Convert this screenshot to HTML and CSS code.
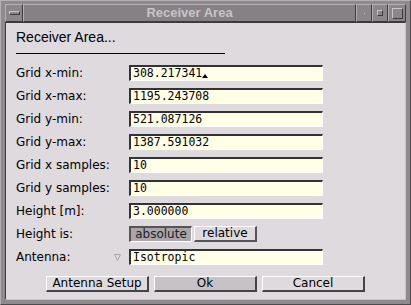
FILE: index.html
```html
<!DOCTYPE html>
<html>
<head>
<meta charset="utf-8">
<link rel="stylesheet" href="styles.css">
</head>
<body>
<div class="window">
  <div class="titlebar">
    <div class="wbtn menu"><span class="menu-bar"></span></div>
    <div class="title">Receiver Area</div>
    <div class="wbtn small"><span class="dot"></span></div>
    <div class="wbtn small"><span class="sq"></span></div>
    <div class="wbtn max"><span class="bigsq"></span></div>
  </div>
  <div class="content">
    <div class="heading">Receiver Area...</div>
    <div class="rule"></div>
    <div class="form">
      <div class="label">Grid x-min:</div>
      <div class="field">308.217341<span class="caret"></span></div>
      <div class="label">Grid x-max:</div>
      <div class="field">1195.243708</div>
      <div class="label">Grid y-min:</div>
      <div class="field">521.087126</div>
      <div class="label">Grid y-max:</div>
      <div class="field">1387.591032</div>
      <div class="label">Grid x samples:</div>
      <div class="field">10</div>
      <div class="label">Grid y samples:</div>
      <div class="field">10</div>
      <div class="label">Height [m]:</div>
      <div class="field">3.000000</div>
      <div class="label">Height is:</div>
      <div class="toggles">
        <div class="tbtn pressed">absolute</div>
        <div class="tbtn">relative</div>
      </div>
      <div class="label antenna">Antenna:<svg class="tri" width="7" height="7" viewBox="0 0 7 7"><path d="M0.5 0.5 H6.5 L3.5 6.5 Z" fill="none" stroke="#a8a4a8" stroke-width="1"/></svg></div>
      <div class="field">Isotropic</div>
    </div>
    <div class="buttons">
      <div class="btn">Antenna Setup</div>
      <div class="btn default">Ok</div>
      <div class="btn">Cancel</div>
    </div>
  </div>
</div>
</body>
</html>
```

FILE: styles.css
```css
* { box-sizing: border-box; }
html, body { margin: 0; padding: 0; background: #8e8a8e; }
.window {
  width: 411px;
  height: 305px;
  background: #8e8a8e;
  border-top: 1px solid #b4b0b4;
  border-left: 1px solid #b4b0b4;
  border-right: 1px solid #4c4a4c;
  border-bottom: 1px solid #4c4a4c;
  padding: 3px 4px 4px 4px;
  display: flex;
  flex-direction: column;
}
.titlebar {
  height: 18px;
  display: flex;
  align-items: stretch;
}
.wbtn {
  background: #8a868a;
  border-top: 1px solid #b4b0b4;
  border-left: 1px solid #b4b0b4;
  border-right: 1px solid #3c3a3c;
  border-bottom: 1px solid #3c3a3c;
  display: flex;
  align-items: center;
  justify-content: center;
}
.menu { width: 18px; }
.menu-bar {
  width: 11px; height: 4px;
  border-top: 1px solid #c8c4c8; border-left: 1px solid #c8c4c8;
  border-right: 1px solid #3c3a3c; border-bottom: 1px solid #3c3a3c;
}
.title {
  flex: 1;
  background: #858185;
  border-top: 1px solid #b4b0b4;
  border-left: 1px solid #b4b0b4;
  border-right: 1px solid #3c3a3c;
  border-bottom: 1px solid #3c3a3c;
  color: #c8c4c8;
  font: bold 13px/16px "Liberation Sans", Arial, sans-serif;
  text-align: center;
}
.small { width: 16px; }
.max { width: 18px; }
.dot { width: 1px; height: 1px; background: #c8c4c8; }
.sq {
  width: 6px; height: 6px;
  border-top: 1px solid #c8c4c8; border-left: 1px solid #c8c4c8;
  border-right: 1px solid #3c3a3c; border-bottom: 1px solid #3c3a3c;
}
.bigsq {
  width: 11px; height: 11px;
  border-top: 1px solid #c8c4c8; border-left: 1px solid #c8c4c8;
  border-right: 1px solid #3c3a3c; border-bottom: 1px solid #3c3a3c;
}
.content {
  flex: 1;
  background: #dedade;
  border-top: 1px solid #3c3a3c;
  border-left: 1px solid #3c3a3c;
  border-right: 1px solid #c8c4c8;
  border-bottom: 1px solid #c8c4c8;
  padding: 6px 0 0 10px;
  font: 12px "DejaVu Sans", Verdana, sans-serif;
  color: #000;
}
.heading {
  font: 14px/17px "Liberation Sans", Arial, sans-serif;
  height: 17px;
}
.rule {
  width: 209px;
  height: 1px;
  background: #000;
  margin-top: 7px;
}
.form {
  margin-top: 11px;
  display: grid;
  grid-template-columns: 113px 194px;
  row-gap: 7px;
  align-items: center;
}
.label {
  height: 16px;
  line-height: 16px;
  white-space: nowrap;
}
.antenna {
  display: flex;
  align-items: center;
  justify-content: space-between;
  padding-right: 8px;
}
.tri { margin-top: 1px; }
.field {
  height: 16px;
  background: #ffffe6;
  border-top: 2px solid #333;
  border-left: 2px solid #333;
  border-right: 1px solid #fff;
  border-bottom: 1px solid #fff;
  padding-left: 2px;
  font: 11.5px/13px "DejaVu Sans Mono", "Liberation Mono", monospace;
  white-space: nowrap;
}
.caret {
  display: inline-block;
  width: 0; height: 0;
  border-left: 3px solid transparent;
  border-right: 3px solid transparent;
  border-bottom: 4px solid #000;
  margin-left: 0px;
  vertical-align: -1px;
}
.toggles {
  display: flex;
  gap: 2px;
}
.tbtn {
  width: 63px;
  height: 16px;
  line-height: 13px;
  text-align: center;
  background: #dedade;
  border-top: 1px solid #fff;
  border-left: 1px solid #fff;
  border-right: 2px solid #555;
  border-bottom: 2px solid #555;
}
.tbtn.pressed {
  background: #a9a5a9;
  border-top: 2px solid #555;
  border-left: 2px solid #555;
  border-right: 1px solid #fff;
  border-bottom: 1px solid #fff;
  color: #222;
}
.buttons {
  margin-top: 11px;
  margin-left: -10px;
  display: flex;
  justify-content: center;
  gap: 5px;
}
.btn {
  width: 103px;
  height: 16px;
  line-height: 13px;
  text-align: center;
  background: #dedade;
  border-top: 1px solid #fff;
  border-left: 1px solid #fff;
  border-right: 2px solid #444;
  border-bottom: 2px solid #444;
}
.btn.default { background: #c6c2c6; }
```
